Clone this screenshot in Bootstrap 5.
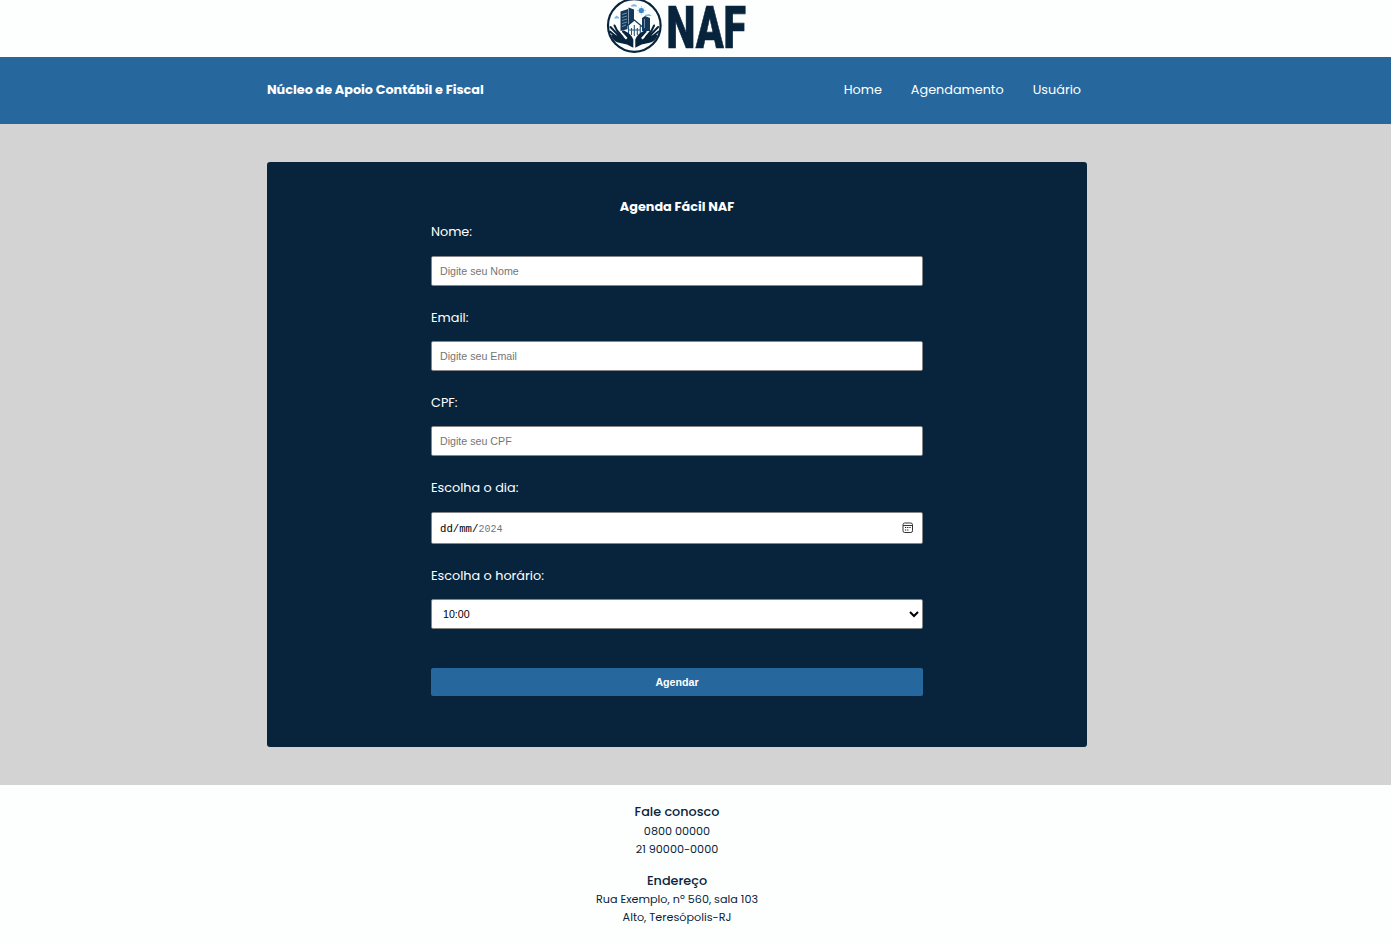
<!DOCTYPE html>
<html lang="pt-BR">
<head>
<meta charset="utf-8">
<meta name="viewport" content="width=device-width, initial-scale=1">
<title>NAF - Agendamento</title>
<link href="https://cdn.jsdelivr.net/npm/bootstrap@5.3.0/dist/css/bootstrap.min.css" rel="stylesheet">
<style>
body{font-family:Poppins,Inter,sans-serif;font-size:12.8px;line-height:20px;background:#fdfffe;color:#08243c;overflow:hidden}
.gutter{padding-right:37px}
.wrap{width:820px}
.site-logo{height:57px}
.site-nav{height:67px;background:#26679d;padding-top:23px}
.site-nav .nav{gap:29px;padding-right:6px}
.site-nav .nav-link{color:#fff;padding:0;font-size:12.8px;line-height:20px}
.brand-name{font-weight:700;color:#fff}
.site-main{height:661px;background:#d3d3d3;padding-top:38px}
.booking{height:585px;background:#08243c;border-radius:3px;padding:35px 164px 0;color:#fff}
.booking h1{font-size:12.8px;line-height:20px;font-weight:700;margin:0 0 5px}
.booking label{display:block;margin:22px 0 13px;line-height:20px}
.booking .first{margin:0 0 14px}
.booking .tall{margin-bottom:14px}
.field{height:30px;padding:0 8px;border:1px solid #858585;border-radius:2px;background:#fff;color:#000;font:10.67px "Liberation Sans",Arial,sans-serif;width:100%}
.field::placeholder{color:#757575;opacity:1}
.datefield{height:32px;font:10.67px "Liberation Mono",monospace;padding-right:7px}
.datevalue{padding-top:2px;line-height:12px}
.timefield{padding:0 3px 0 11px}
.year{color:#757575;font-size:10px}
.send{height:28px;margin-top:39px;padding:0;border:0;border-radius:2px;background:#26679d;color:#fff;font:bold 10.67px "Liberation Sans",Arial,sans-serif}
.site-foot{padding-top:17px;font-size:11.2px;line-height:18px}
.site-foot h2{font-size:12.8px;line-height:20px;font-weight:500;margin:0}
.site-foot .address{margin:13px 0 -1px}
</style>
</head>
<body>
<header class="site-logo gutter d-flex justify-content-center">
<svg class="overflow-visible" width="142" height="57" viewBox="606 0 142 57" role="img" aria-label="NAF">
<circle cx="634.3" cy="25.5" r="26.3" fill="#fdfffe" stroke="#08243c" stroke-width="2.2"/>
<g fill="#78b9e9"><path d="M631 5.500l3-1.500 3 1.500v1h-6zM614 17.500h1l1-2 2 1 1 1v1h-5zM645 15l4-1 3 2h-7z"/></g>
<path d="M641.300 6v9M637 10.500h9M638.200 7.400l6.200 6.200M644.400 7.400l-6.200 6.200" stroke="#78b9e9" stroke-width=".6"/>
<circle cx="641.300" cy="10.500" r="2.600" fill="#3b87c8"/>
<path d="M620.500 31V11.500l7.500-2.500v20zM628.500 7.500l5.500 2V22l-5.500 5zM642 18l3-2 5 2v13h-8z" fill="#12395c"/>
<path d="M622 14.500l5-1.500M622 17.500l5-1.500M622 20.500l5-1.500M622 23.500l5-1.500M622 26.500l4-1.500M644.500 19v9" stroke="#8ca6ba" stroke-width=".8"/>
<path d="M627.500 26.500h13.500V38h-13.500z" fill="#fdfffe"/>
<path d="M626 27l8.300-7 8.300 7" fill="#fdfffe" stroke="#12395c" stroke-width="1.300"/>
<path d="M628.500 26v8M640.300 26v8M634.300 25v11M629 30h11M631.500 28v7M637.300 28v7" stroke="#28547a" stroke-width="1.100"/>
<g id="hand"><path d="M633.300 47.800V39.500C632 35.500 628.500 32.500 624 30.500C621.500 30 621.500 31.800 623 33L627.500 38L626 39.500L621.500 35L616 35.500L611 34.500C611.500 38 614 41.500 619 42.700L627 44.500Z" fill="#08243c"/><path d="M610.500 27L620 37M614.500 25.500L617 30.500L622.500 37M610 31.500L618 38" fill="none" stroke="#08243c" stroke-width="2" stroke-linecap="round" stroke-linejoin="round"/></g>
<use href="#hand" transform="translate(1268.6 0) scale(-1 1)"/>
<text x="666.500" y="47.800" textLength="79.500" lengthAdjust="spacingAndGlyphs" font-family="Roboto" font-weight="900" font-size="60" fill="#08243c" stroke="#08243c" stroke-width=".7">NAF</text>
</svg>
</header>
<nav class="site-nav gutter">
<div class="wrap mx-auto d-flex justify-content-between">
<span class="brand-name">Núcleo de Apoio Contábil e Fiscal</span>
<div class="nav"><a class="nav-link" href="#">Home</a><a class="nav-link" href="#">Agendamento</a><a class="nav-link" href="#">Usuário</a></div>
</div>
</nav>
<main class="site-main gutter">
<form class="booking wrap mx-auto">
<h1 class="text-center">Agenda Fácil NAF</h1>
<label class="first" for="nome">Nome:</label>
<input class="field d-block" id="nome" placeholder="Digite seu Nome">
<label for="email">Email:</label>
<input class="field d-block" id="email" placeholder="Digite seu Email">
<label for="cpf">CPF:</label>
<input class="field d-block" id="cpf" placeholder="Digite seu CPF">
<label class="tall">Escolha o dia:</label>
<div class="field datefield d-flex align-items-center"><span class="datevalue">dd/mm/<span class="year">2024</span></span>
<svg class="ms-auto" width="13" height="12" viewBox="0 0 13 12"><rect x="1" y="1" width="9.500" height="9.500" rx="1.700" fill="none" stroke="#333"/><path d="M1 3.500h9.500" stroke="#333"/><path d="M3 5.500h1.200M5.200 5.500h1.200M7.400 5.500h1.200M3 8h1.200M5.200 8h1.200" stroke="#111" stroke-width="1.200"/></svg></div>
<label>Escolha o horário:</label>
<div class="field timefield d-flex align-items-center"><span>10:00</span>
<svg class="ms-auto" width="10" height="7" viewBox="0 0 10 7"><path d="M1 1l4 4 4-4" fill="none" stroke="#000" stroke-width="2"/></svg></div>
<button class="send w-100 d-block" type="button">Agendar</button>
</form>
</main>
<footer class="site-foot gutter text-center">
<h2>Fale conosco</h2>
<div>0800 00000</div><div>21 90000-0000</div>
<h2 class="address">Endereço</h2>
<div>Rua Exemplo, nº 560, sala 103</div><div>Alto, Teresópolis-RJ</div>
</footer>
<script src="https://cdn.jsdelivr.net/npm/bootstrap@5.3.0/dist/js/bootstrap.bundle.min.js"></script>
</body>
</html>
